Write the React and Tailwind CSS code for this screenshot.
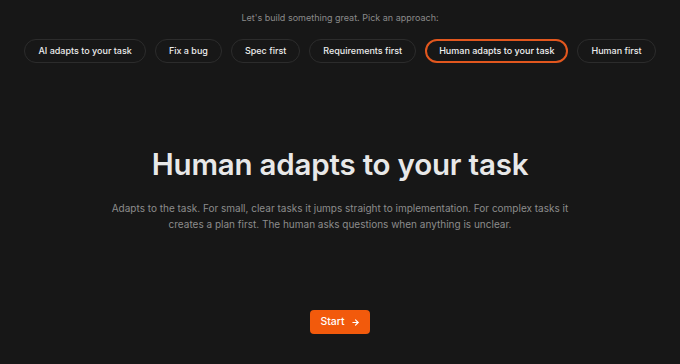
export default function App() {
  const pills = [
    "AI adapts to your task",
    "Fix a bug",
    "Spec first",
    "Requirements first",
    "Human adapts to your task",
    "Human first",
  ];
  const selected = 4;
  return (
    <div
      className="w-[680px] h-[364px] bg-[#171717] flex flex-col items-center overflow-hidden"
      style={{ fontFamily: "Inter, 'Noto Sans', sans-serif" }}
    >
      <div className="mt-[11px] h-[13px] text-[9px] leading-[13px] text-[#8a8a8a] whitespace-nowrap">
        Let's build something great. Pick an approach:
      </div>
      <div className="mt-[15px] flex gap-[9px] whitespace-nowrap">
        {pills.map((p, i) => (
          <div
            key={p}
            className={
              i === selected
                ? "shrink-0 h-[24px] px-[12px] rounded-full border-2 border-[#e2571e] flex items-center text-[9px] font-medium text-[#f0f0f0]"
                : "shrink-0 h-[24px] px-[13px] rounded-full border border-[#2c2c2c] flex items-center text-[9px] font-medium text-[#ececec]"
            }
          >
            {p}
          </div>
        ))}
      </div>
      <h1 className="mt-[83px] text-[29.5px] leading-[36px] font-semibold text-[#e8e8e8] tracking-[-0.2px] whitespace-nowrap">
        Human adapts to your task
      </h1>
      <p className="mt-[18px] w-[470px] text-center text-[10px] leading-[16px] text-[#8c8c8c]">
        Adapts to the task. For small, clear tasks it jumps straight to implementation. For complex tasks it creates a plan first. The human asks questions when anything is unclear.
      </p>
      <button className="mt-[78px] w-[60px] h-[24px] rounded-[4px] bg-[#f25a0c] flex items-center justify-center gap-[6px] text-[10.5px] font-medium text-white">
        <span>Start</span>
        <svg width="9" height="9" viewBox="0 0 24 24" fill="none" stroke="currentColor" strokeWidth="3" strokeLinecap="round" strokeLinejoin="round">
          <path d="M5 12h14" />
          <path d="M12 5l7 7-7 7" />
        </svg>
      </button>
    </div>
  );
}
